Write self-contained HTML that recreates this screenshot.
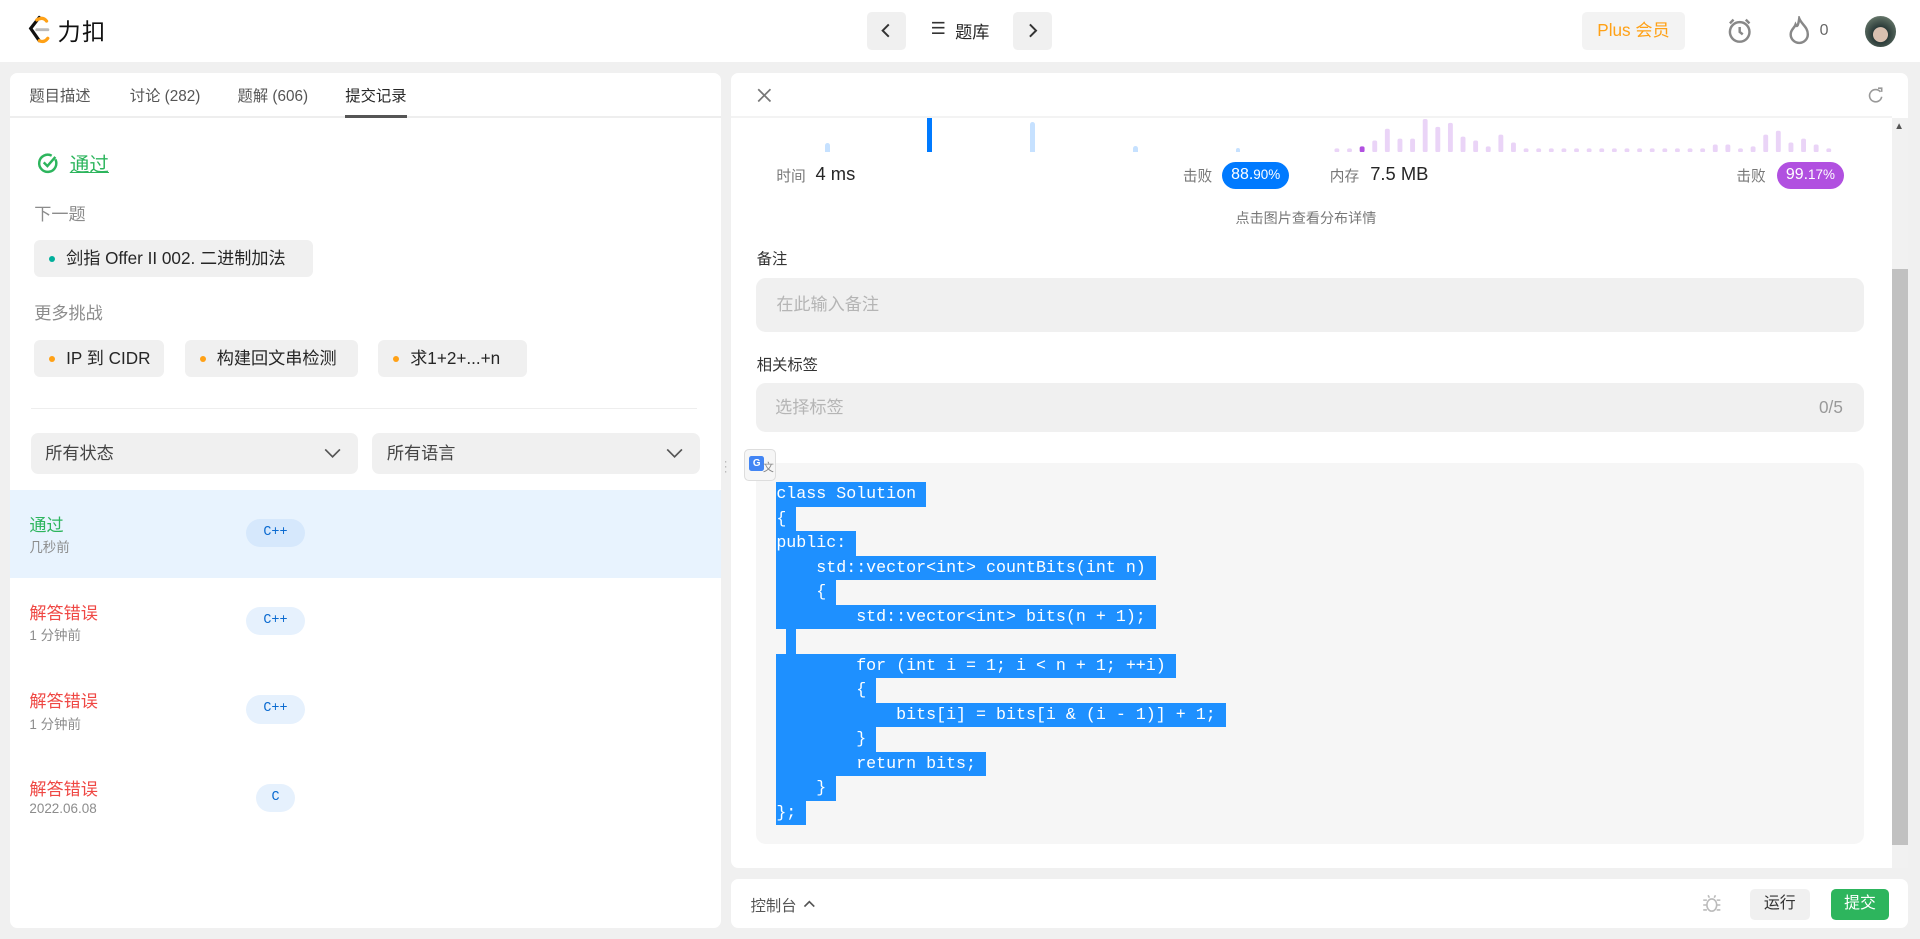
<!DOCTYPE html>
<html><head><meta charset="utf-8">
<style>
*{box-sizing:border-box;margin:0;padding:0}
html,body{width:1920px;height:939px;overflow:hidden;background:#f0f0f0}
#w{zoom:1.22449;width:1568px;height:767px;position:relative;font-family:"Liberation Sans","Noto Sans CJK SC",sans-serif;color:#262626;font-size:14px}
.a{position:absolute;white-space:nowrap}
.chip{position:absolute;height:30px;background:#f0f0f0;border-radius:5px;font-size:14px;line-height:30px;padding-left:26px;color:#262626}
.chip i{position:absolute;left:12px;top:13px;width:5px;height:5px;border-radius:50%;background:#ffa116}
.sel{position:absolute;top:354px;height:33px;background:#f0f0f0;border-radius:6px;font-size:14px;line-height:33px;padding-left:12px;color:#444}
.row{position:absolute;left:8px;width:581px;height:72px}
.row .t{position:absolute;left:16px;top:17px;font-size:14px}
.row .s{position:absolute;left:16px;top:38px;font-size:11px;color:#8c8c8c}
.row .b{position:absolute;top:24px;height:23px;border-radius:12px;background:#e6f1fd;color:#0a6ad0;font-family:"Liberation Mono",monospace;font-size:11px;line-height:23px;text-align:center}
.code{position:absolute;left:634px;top:394px;font-family:"Liberation Mono",monospace;font-size:13.6px;line-height:20px;color:#fff}
.code div{height:20px}
.code span{background:#1e90ff;display:inline-block;height:20px;white-space:pre}
.bars i{position:absolute;bottom:643px;width:4px;border-radius:2px 2px 0 0}
</style></head><body><div id="w">
<!-- header -->
<div class="a" style="left:0;top:0;width:1568px;height:51px;background:#fff"></div>
<svg class="a" style="left:22px;top:12px" width="22" height="24" viewBox="0 0 22 24"><path d="M10 2 L3 11 L10 21" stroke="#111" stroke-width="2.6" fill="none" stroke-linecap="round"/><path d="M10 21 Q14 23 17 19" stroke="#ffa116" stroke-width="2.6" fill="none" stroke-linecap="round"/><path d="M8 4 Q13 1 16 5" stroke="#ffa116" stroke-width="2.6" fill="none" stroke-linecap="round"/><path d="M8 12 H17" stroke="#bbb" stroke-width="2.4" stroke-linecap="round"/></svg>
<div class="a" style="left:47px;top:11px;font-size:19px;color:#111;letter-spacing:1px">力扣</div>
<div class="a" style="left:708px;top:10px;width:32px;height:31px;background:#f0f0f0;border-radius:4px"></div>
<svg class="a" style="left:718px;top:18px" width="12" height="14"><path d="M8 2 L3 7 L8 12" stroke="#333" stroke-width="1.6" fill="none"/></svg>
<div class="a" style="left:760px;top:15px;font-size:14px;color:#333">☰</div>
<div class="a" style="left:780px;top:15px;font-size:14px;color:#262626">题库</div>
<div class="a" style="left:827px;top:10px;width:32px;height:31px;background:#f0f0f0;border-radius:4px"></div>
<svg class="a" style="left:837px;top:18px" width="12" height="14"><path d="M4 2 L9 7 L4 12" stroke="#333" stroke-width="1.6" fill="none"/></svg>
<div class="a" style="left:1292px;top:10px;width:84px;height:31px;background:#f3f3f3;border-radius:4px;color:#ffa116;font-size:14px;line-height:31px;text-align:center">Plus 会员</div>
<svg class="a" style="left:1409px;top:13px" width="24" height="24" viewBox="0 0 24 24" fill="none" stroke="#888" stroke-width="2"><circle cx="12" cy="13" r="8"/><path d="M12 9v4l2.5 2M4 6l3-3M20 6l-3-3"/></svg>
<svg class="a" style="left:1459px;top:13px" width="20" height="24" viewBox="0 0 20 24" fill="none" stroke="#888" stroke-width="2"><path d="M10 2 C12 7 17 9 17 15 A7 7 0 0 1 3 15 C3 11 6 10 7 7 C8 9 9 9 10 2Z"/></svg>
<div class="a" style="left:1486px;top:18px;font-size:13px;color:#666">0</div>
<div class="a" style="left:1523px;top:13px;width:25px;height:25px;border-radius:50%;background:radial-gradient(circle at 50% 60%,#d8c0b0 0 30%,#2a3a38 32%,#5a6b60 70%,#a9b7a8)"></div>

<!-- left panel -->
<div class="a" style="left:8px;top:60px;width:581px;height:698px;background:#fff;border-radius:6px"></div>
<div class="a" style="left:8px;top:95px;width:581px;height:1px;background:#eee"></div>
<div class="a" style="left:24px;top:69px;font-size:12.5px;color:#555">题目描述</div>
<div class="a" style="left:106px;top:69px;font-size:12.5px;color:#555">讨论 (282)</div>
<div class="a" style="left:194px;top:69px;font-size:12.5px;color:#555">题解 (606)</div>
<div class="a" style="left:282px;top:69px;font-size:12.5px;color:#262626">提交记录</div>
<div class="a" style="left:282px;top:94px;width:50px;height:2px;background:#555"></div>
<svg class="a" style="left:30px;top:124px" width="18" height="18" viewBox="0 0 18 18" fill="none" stroke="#2db55d" stroke-width="2"><path d="M15 6 A7 7 0 1 1 12 3"/><path d="M5.5 8.5 L8.5 11.5 L15 4"/></svg>
<div class="a" style="left:57px;top:121px;font-size:16px;color:#2db55d;text-decoration:underline">通过</div>
<div class="a" style="left:28px;top:163px;font-size:14px;color:#8c8c8c">下一题</div>
<div class="chip" style="left:28px;top:196px;width:228px"><i style="background:#00af9b"></i>剑指 Offer II 002. 二进制加法</div>
<div class="a" style="left:28px;top:244px;font-size:14px;color:#8c8c8c">更多挑战</div>
<div class="chip" style="left:28px;top:278px;width:106px"><i></i>IP 到 CIDR</div>
<div class="chip" style="left:151px;top:278px;width:141px"><i></i>构建回文串检测</div>
<div class="chip" style="left:309px;top:278px;width:121px"><i></i>求1+2+...+n</div>
<div class="a" style="left:25px;top:333px;width:544px;height:1px;background:#eee"></div>
<div class="sel" style="left:25px;width:267px">所有状态</div>
<div class="sel" style="left:304px;width:268px">所有语言</div>
<svg class="a" style="left:265px;top:365px" width="14" height="10"><path d="M1 2 L7 8 L13 2" stroke="#555" stroke-width="1.4" fill="none"/></svg>
<svg class="a" style="left:544px;top:365px" width="14" height="10"><path d="M1 2 L7 8 L13 2" stroke="#555" stroke-width="1.4" fill="none"/></svg>
<div class="row" style="top:400px;background:#e8f3fe"><div class="t" style="color:#2db55d">通过</div><div class="s">几秒前</div><div class="b" style="left:193px;width:48px;background:#d6e8fc">C++</div></div>
<div class="row" style="top:472px"><div class="t" style="color:#ef4743">解答错误</div><div class="s">1 分钟前</div><div class="b" style="left:193px;width:48px">C++</div></div>
<div class="row" style="top:544px"><div class="t" style="color:#ef4743">解答错误</div><div class="s">1 分钟前</div><div class="b" style="left:193px;width:48px">C++</div></div>
<div class="row" style="top:616px"><div class="t" style="color:#ef4743">解答错误</div><div class="s">2022.06.08</div><div class="b" style="left:201px;width:32px">C</div></div>
<div class="a" style="left:591px;top:375px;font-size:10px;color:#aaa;line-height:4px">·<br>·<br>·</div>

<!-- right panel -->
<div class="a" style="left:597px;top:60px;width:961px;height:649px;background:#fff;border-radius:6px"></div>
<div class="a" style="left:597px;top:95px;width:948px;height:1px;background:#f3f3f3"></div>
<svg class="a" style="left:618px;top:72px" width="12" height="12"><path d="M1 1L11 11M11 1L1 11" stroke="#777" stroke-width="1.4"/></svg>
<svg class="a" style="left:1525px;top:71px" width="14" height="14" viewBox="0 0 14 14" fill="none" stroke="#999" stroke-width="1.3"><path d="M11 4 A5 5 0 1 0 12 8"/><path d="M9 1 L12 1 L12 4"/></svg>
<div class="a" style="left:1545px;top:96px;width:13px;height:613px;background:#f1f1f1"></div>
<div class="a" style="left:1545px;top:220px;width:13px;height:470px;background:#c1c1c1"></div>
<div class="a" style="left:1547px;top:99px;font-size:8px;color:#555">▲</div>
<div class="bars" style="position:absolute;left:0;top:0;width:1568px;height:767px">
<i style="left:674px;height:7px;background:#c6e1ff"></i>
<i style="left:757px;height:28px;background:#007aff;border-radius:0"></i>
<i style="left:841px;height:24px;background:#c6e1ff"></i>
<i style="left:925px;height:5px;background:#c6e1ff"></i>
<i style="left:1009px;height:3px;background:#c6e1ff"></i>
</div>
<svg class="a" style="left:1088px;top:96px" width="420" height="28" id="pb"></svg>
<div class="a" style="left:634px;top:135px;font-size:12px;color:#777">时间</div>
<div class="a" style="left:666px;top:133px;font-size:15px;color:#262626">4 ms</div>
<div class="a" style="left:966px;top:135px;font-size:12px;color:#777">击败</div>
<div class="a" style="left:998px;top:132px;width:55px;height:22px;border-radius:11px;background:#007aff;color:#fff;font-size:13px;line-height:22px;text-align:center">88.<span style="font-size:11px">90%</span></div>
<div class="a" style="left:1086px;top:135px;font-size:12px;color:#777">内存</div>
<div class="a" style="left:1119px;top:133px;font-size:15px;color:#262626">7.5 MB</div>
<div class="a" style="left:1418px;top:135px;font-size:12px;color:#777">击败</div>
<div class="a" style="left:1451px;top:132px;width:55px;height:22px;border-radius:11px;background:#b150e0;color:#fff;font-size:13px;line-height:22px;text-align:center">99.<span style="font-size:11px">17%</span></div>
<div class="a" style="left:1009px;top:170px;font-size:11.5px;color:#777">点击图片查看分布详情</div>
<div class="a" style="left:618px;top:202px;font-size:12.5px;color:#333">备注</div>
<div class="a" style="left:617px;top:227px;width:905px;height:44px;background:#f0f0f0;border-radius:8px;padding-left:17px;line-height:44px;font-size:14px;color:#b5b5b5">在此输入备注</div>
<div class="a" style="left:618px;top:288px;font-size:12.5px;color:#333">相关标签</div>
<div class="a" style="left:617px;top:313px;width:905px;height:40px;background:#f0f0f0;border-radius:8px;padding-left:16px;line-height:40px;font-size:14px;color:#b5b5b5">选择标签<span style="position:absolute;right:17px;color:#999">0/5</span></div>
<div class="a" style="left:617px;top:378px;width:905px;height:311px;background:#f6f6f6;border-radius:8px"></div>
<div class="a" style="left:608px;top:367px;width:26px;height:26px;background:#f6f6f6;border:1px solid #ddd;border-radius:4px"></div>
<div class="a" style="left:612px;top:372px;width:12px;height:13px;background:#4285f4;border-radius:2px;color:#fff;font-size:8px;font-weight:bold;line-height:13px;text-align:center">G</div>
<div class="a" style="left:623px;top:375px;font-size:9px;color:#888">文</div>
<div class="code">
<div><span>class Solution </span></div>
<div><span>{ </span></div>
<div><span>public: </span></div>
<div><span>    std::vector&lt;int&gt; countBits(int n) </span></div>
<div><span>    { </span></div>
<div><span>        std::vector&lt;int&gt; bits(n + 1); </span></div>
<div><span style="margin-left:8px"> </span></div>
<div><span>        for (int i = 1; i &lt; n + 1; ++i) </span></div>
<div><span>        { </span></div>
<div><span>            bits[i] = bits[i &amp; (i - 1)] + 1; </span></div>
<div><span>        } </span></div>
<div><span>        return bits; </span></div>
<div><span>    } </span></div>
<div><span>}; </span></div>
</div>

<!-- bottom bar -->
<div class="a" style="left:597px;top:718px;width:961px;height:40px;background:#fff;border-radius:6px"></div>
<div class="a" style="left:613px;top:730px;font-size:12.5px;color:#555">控制台</div>
<svg class="a" style="left:655px;top:733px" width="12" height="10"><path d="M2 7 L6 3 L10 7" stroke="#555" stroke-width="1.4" fill="none"/></svg>
<svg class="a" style="left:1390px;top:730px" width="16" height="16" viewBox="0 0 16 16" fill="none" stroke="#bbb" stroke-width="1.3"><ellipse cx="8" cy="9" rx="4" ry="5"/><path d="M1 5h3M12 5h3M1 9h3M12 9h3M1 13h3M12 13h3M6 3 L5 1M10 3 L11 1"/></svg>
<div class="a" style="left:1429px;top:726px;width:49px;height:25px;background:#f0f0f0;border-radius:4px;font-size:13px;line-height:25px;text-align:center;color:#333">运行</div>
<div class="a" style="left:1495px;top:726px;width:48px;height:25px;background:#2db55d;border-radius:4px;font-size:13px;line-height:25px;text-align:center;color:#fff">提交</div>
</div>
<script>
var h=[2,2,3,6,12,7,7,17,13,15,8,6,3,9,5,2,2,2,2,2,2,2,2,2,2,2,2,2,2,2,4,4,2,3,9,11,5,7,4,2];
var s='';for(var i=0;i<h.length;i++){var x=2+i*10.3;var c=i==2?'#b150e0':'#ead4f7';s+='<rect x="'+x.toFixed(1)+'" y="'+(28-h[i]*1.6).toFixed(1)+'" width="4" height="'+(h[i]*1.6).toFixed(1)+'" rx="1.5" fill="'+c+'"/>';}
document.getElementById('pb').innerHTML=s;
</script>
</body></html>
